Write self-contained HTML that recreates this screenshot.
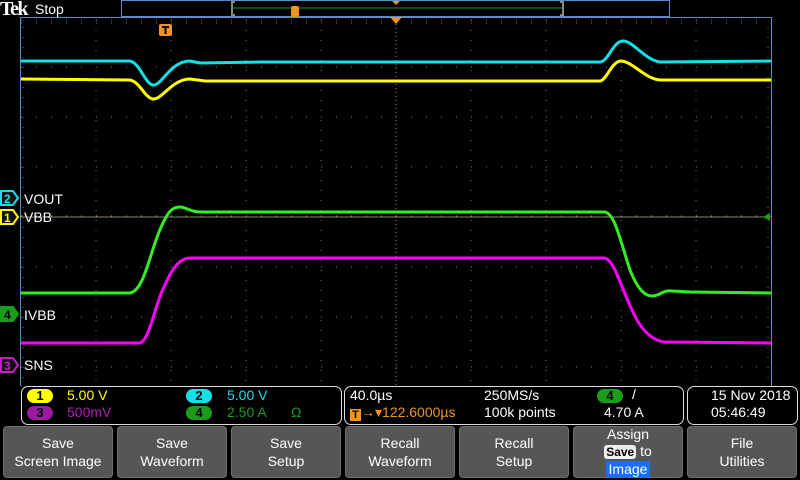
<!DOCTYPE html>
<html><head><meta charset="utf-8"><style>
body{margin:0;width:800px;height:480px;background:#000;overflow:hidden;position:relative;font-family:"Liberation Sans","DejaVu Sans",sans-serif;color:#fff}
.a{position:absolute}
.btn{position:absolute;top:426px;width:110px;height:52px;background:#555755;border:1px solid #6c6e6c;border-radius:4px;color:#fff;font-size:14px;text-align:center;line-height:18px;box-sizing:border-box;display:flex;flex-direction:column;justify-content:center}
.box{position:absolute;border:1px solid #ddd;border-radius:7px;box-sizing:border-box}
.t{position:absolute;font-size:14px;white-space:nowrap}
.bd{position:absolute;width:26px;height:14px;border-radius:7px;color:#000;font-weight:bold;font-size:13px;text-align:center;line-height:14px}
</style></head><body>
<svg class="a" style="left:0;top:0" width="800" height="426">
<text x="0" y="15" font-family="Liberation Serif" font-weight="bold" font-size="20" fill="#fff" letter-spacing="-1.5">Tek</text>
<text x="35" y="14" font-size="14" fill="#fff" font-family="Liberation Sans">Stop</text>
<rect x="121.5" y="0.5" width="548" height="16" fill="none" stroke="#5a8cc8"/>
<line x1="233" y1="8" x2="562" y2="8" stroke="#1c9c1c"/>
<path d="M235 2H232V15H235M560 2H563V15H560" fill="none" stroke="#8c8c78" stroke-width="2"/>
<rect x="291" y="6" width="8" height="11" rx="2" fill="#f7931e"/>
<path d="M392 1h8l-4 4z" fill="#f7931e"/>
<line x1="20.5" y1="17" x2="20.5" y2="386" stroke="#5a8cc8"/>
<line x1="20" y1="17.5" x2="771.5" y2="17.5" stroke="#5a8cc8"/>
<line x1="771.5" y1="17" x2="771.5" y2="386" stroke="#5a8cc8"/>
<g stroke="#777" stroke-dasharray="1 9">
<path d="M96 20V386M171 20V386M246 20V386M321 20V386M471 20V386M546 20V386M621 20V386M696 20V386"/>
<path d="M396 20V386" stroke="#8a8a8a" stroke-dasharray="1 3"/>
<path d="M21 67H771M21 117H771M21 167H771M21 267H771M21 317H771M21 367H771" stroke-dasharray="1 14"/>
<path d="M21 20H771M21 23H771" stroke-dasharray="1 14"/>
<path d="M23 17V386M768 17V386" stroke-dasharray="1 9"/>
</g>
<line x1="21" y1="217" x2="771" y2="217" stroke="#8c7f6a"/>
<path d="M21 216H771" stroke="#b8a98a" stroke-dasharray="1 14"/>
<path d="M390 17h12l-6 7z" fill="#f7931e"/>
<rect x="159" y="24" width="13" height="12" rx="2" fill="#f7931e"/><path d="M162 27h7M165.5 27v7" stroke="#000" stroke-width="2"/>
<path d="M770 221l-7-4 7-4z" fill="#1c9c1c"/>
<g fill="none" stroke-width="3" stroke-linejoin="round">
<path stroke="#14e0e8" d="M21 61L130 61C140 63 145 84 153 85C162 86 170 61 190 61L200 63L260 62L600 62C608 62 613 41 623 41C633 41 645 60 660 62L771 61"/>
<path stroke="#ffff00" d="M21 79L130 80C140 82 145 98 153 99C162 100 172 79 190 79L205 81L600 81C606 81 612 61 621 61C632 61 645 79 660 80L771 80"/>
<path stroke="#33ee22" d="M21 293L130 293C145 290 150 250 162 225C168 212 172 207 180 207C186 207 190 212 200 212L605 212C615 214 620 240 630 270C638 290 645 296 652 296C660 296 662 290 672 291L690 292L771 293"/>
<path stroke="#ff00ff" d="M21 343L140 343C150 340 156 300 165 285C172 268 180 258 190 258L250 258L605 258C615 262 620 285 632 310C640 328 650 340 665 342L771 343"/>
</g>
<path d="M1 191h12l5 7-5 7H1z" fill="#111" stroke="#14e0e8" stroke-width="2"/><text x="4" y="203" font-size="12" font-weight="bold" fill="#14e0e8">2</text>
<path d="M1 210h12l5 7-5 7H1z" fill="#111" stroke="#ffff00" stroke-width="2"/><text x="4" y="222" font-size="12" font-weight="bold" fill="#ffff00">1</text>
<path d="M1 307h12l5 7-5 7H1z" fill="#1c9c1c" stroke="#1c9c1c" stroke-width="2"/><text x="4" y="319" font-size="12" font-weight="bold" fill="#000">4</text>
<path d="M1 358h12l5 7-5 7H1z" fill="#111" stroke="#c020c0" stroke-width="2"/><text x="4" y="370" font-size="12" font-weight="bold" fill="#c020c0">3</text>
<g font-size="14" fill="#fff"><text x="24" y="204">VOUT</text><text x="24" y="222">VBB</text><text x="24" y="320">IVBB</text><text x="24" y="370">SNS</text></g>
</svg>
<div class="box" style="left:21px;top:386px;width:321px;height:39px"></div>
<div class="bd" style="left:27px;top:389px;background:#ffff00">1</div>
<div class="t" style="left:67px;top:387px;color:#ffff00">5.00 V</div>
<div class="bd" style="left:186px;top:389px;background:#14e0e8">2</div>
<div class="t" style="left:227px;top:387px;color:#14e0e8">5.00 V</div>
<div class="bd" style="left:27px;top:406px;background:#9a1aa0">3</div>
<div class="t" style="left:67px;top:404px;color:#b020b0">500mV</div>
<div class="bd" style="left:186px;top:406px;background:#1c9c1c">4</div>
<div class="t" style="left:227px;top:404px;color:#1c9c1c">2.50 A</div>
<div class="t" style="left:291px;top:404px;color:#1c9c1c">Ω</div>
<div class="box" style="left:344px;top:386px;width:340px;height:39px"></div>
<div class="t" style="left:350px;top:387px">40.0µs</div>
<div class="t" style="left:350px;top:404px;color:#f7931e"><span style="display:inline-block;width:11px;height:12px;background:#f7931e;color:#000;font-size:11px;font-weight:bold;text-align:center;line-height:12px;vertical-align:-1px">T</span>→▾122.6000µs</div>
<div class="t" style="left:484px;top:387px">250MS/s</div>
<div class="t" style="left:484px;top:404px">100k points</div>
<div class="bd" style="left:597px;top:389px;background:#1c9c1c">4</div>
<div class="t" style="left:632px;top:386px">/</div>
<div class="t" style="left:604px;top:404px">4.70 A</div>
<div class="box" style="left:687px;top:386px;width:111px;height:39px"></div>
<div class="t" style="left:711px;top:387px">15 Nov 2018</div>
<div class="t" style="left:711px;top:404px">05:46:49</div>
<div class="btn" style="left:3px">Save<br>Screen Image</div>
<div class="btn" style="left:117px">Save<br>Waveform</div>
<div class="btn" style="left:231px">Save<br>Setup</div>
<div class="btn" style="left:345px">Recall<br>Waveform</div>
<div class="btn" style="left:459px">Recall<br>Setup</div>
<div class="btn" style="left:573px;line-height:17px">Assign<br><span><span style="background:#eee;color:#000;font-weight:bold;font-size:12px;border-radius:3px;padding:0 2px">Save</span> to</span><span style="background:#1a6ff0;padding:0 3px;align-self:center">Image</span></div>
<div class="btn" style="left:687px">File<br>Utilities</div>
</body></html>
